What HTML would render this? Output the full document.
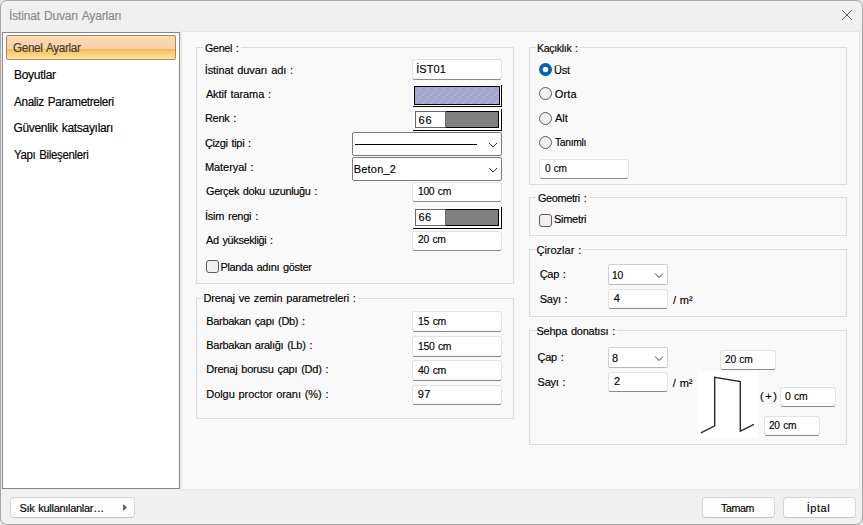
<!DOCTYPE html>
<html><head><meta charset="utf-8"><style>
html,body{margin:0;padding:0;width:863px;height:525px;overflow:hidden;background:#e4e4e4}
.a{position:absolute}
.win{position:absolute;left:0;top:0;width:863px;height:525px;background:#f0f0f0;border:1px solid #a6a6a6;border-radius:7px;box-sizing:border-box}
.grp{position:absolute;border:1px solid #dcdcdc;box-sizing:border-box}
.tb{position:absolute;background:#fff;border:1px solid #e2e2e2;border-bottom:1px solid #8a8a8a;border-radius:3px;box-sizing:border-box}
.cb{position:absolute;background:#fff;border:1px solid #7a7a7a;border-radius:2px;box-sizing:border-box}
.cb2{border-color:#d0d0d0;border-bottom-color:#b8b8b8}
.t{position:absolute;white-space:nowrap;font-family:'Liberation Sans',sans-serif;line-height:40px;-webkit-text-stroke:0.15px currentColor}
</style></head><body>
<div class="win"></div>
<div class="a" style="left:2px;top:32px;width:178px;height:457px;background:#fff;border:1px solid #828790;box-sizing:border-box"></div>
<div class="a" style="left:6px;top:35px;width:170px;height:25px;border:1px solid #a9895c;border-radius:2px;box-sizing:border-box;background:linear-gradient(#fcdcb8 0%,#fbd1a2 55%,#f7b85c 57%,#f8c469 66%,#fbd888 86%,#fde596 100%)"></div>
<div class="a" style="left:181px;top:31px;width:679px;height:459px;background:#f9f9f9;border:1px solid #e6e6e6;box-sizing:border-box"></div>
<div class="grp" style="left:196px;top:47px;width:318px;height:237px"></div>
<div class="grp" style="left:196px;top:298px;width:318px;height:121px"></div>
<div class="grp" style="left:529px;top:47px;width:318px;height:138px"></div>
<div class="grp" style="left:529px;top:197px;width:318px;height:39px"></div>
<div class="grp" style="left:529px;top:249px;width:318px;height:68px"></div>
<div class="grp" style="left:529px;top:330px;width:318px;height:115px"></div>
<div class="a" style="left:203px;top:46px;width:38px;height:3px;background:#f9f9f9"></div>
<div class="a" style="left:203px;top:297px;width:155px;height:3px;background:#f9f9f9"></div>
<div class="a" style="left:536px;top:46px;width:44px;height:3px;background:#f9f9f9"></div>
<div class="a" style="left:536px;top:196px;width:54px;height:3px;background:#f9f9f9"></div>
<div class="a" style="left:536px;top:248px;width:47px;height:3px;background:#f9f9f9"></div>
<div class="a" style="left:536px;top:329px;width:81px;height:3px;background:#f9f9f9"></div>
<div class="tb" style="left:412px;top:59px;width:90px;height:21px"></div>
<div class="tb" style="left:412px;top:182px;width:90px;height:20px"></div>
<div class="tb" style="left:412px;top:231px;width:90px;height:20px"></div>
<div class="tb" style="left:412px;top:311px;width:90px;height:21px"></div>
<div class="tb" style="left:412px;top:336px;width:90px;height:21px"></div>
<div class="tb" style="left:412px;top:360px;width:90px;height:21px"></div>
<div class="tb" style="left:412px;top:385px;width:90px;height:20px"></div>
<div class="tb" style="left:539px;top:159px;width:90px;height:20px"></div>
<div class="tb" style="left:608px;top:289px;width:60px;height:20px"></div>
<div class="tb" style="left:608px;top:372px;width:60px;height:20px"></div>
<div class="tb" style="left:720px;top:350px;width:56px;height:20px"></div>
<div class="tb" style="left:780px;top:387px;width:56px;height:20px"></div>
<div class="tb" style="left:764px;top:416px;width:56px;height:20px"></div>
<div class="cb" style="left:352px;top:132px;width:150px;height:24px"><svg width="150" height="24" style="position:absolute;left:-1px;top:-1px"><path d="M137.0 11.0 L141.0 15.0 L145.0 11.0" fill="none" stroke="#333" stroke-width="1"/></svg></div>
<div class="cb" style="left:352px;top:157px;width:150px;height:24px"><svg width="150" height="24" style="position:absolute;left:-1px;top:-1px"><path d="M137.0 11.0 L141.0 15.0 L145.0 11.0" fill="none" stroke="#333" stroke-width="1"/></svg></div>
<div class="cb cb2" style="left:608px;top:264px;width:60px;height:21px"><svg width="60" height="21" style="position:absolute;left:-1px;top:-1px"><path d="M47.0 9.5 L51.0 13.5 L55.0 9.5" fill="none" stroke="#333" stroke-width="1"/></svg></div>
<div class="cb cb2" style="left:608px;top:347px;width:60px;height:21px"><svg width="60" height="21" style="position:absolute;left:-1px;top:-1px"><path d="M47.0 9.5 L51.0 13.5 L55.0 9.5" fill="none" stroke="#333" stroke-width="1"/></svg></div>
<div class="a" style="left:355px;top:144px;width:122px;height:1px;background:#000"></div>
<div class="a" style="left:413px;top:85px;width:89px;height:22px;background:#fff;border-right:1px solid #000;border-bottom:1px solid #000;box-sizing:border-box"></div>
<div class="a" style="left:414px;top:86px;width:86px;height:19px;border:1px solid #000;box-sizing:border-box;background:#a4a4d4"></div>
<svg class="a" style="left:415px;top:87px" width="84" height="17"><defs><pattern id="hp" patternUnits="userSpaceOnUse" width="8" height="8"><rect x="1" y="6" width="1" height="1" fill="#c4c4b4"/><rect x="3" y="4" width="1" height="1" fill="#c4c4b4"/><rect x="5" y="2" width="1" height="1" fill="#c4c4b4"/><rect x="7" y="0" width="1" height="1" fill="#c4c4b4"/><rect x="0" y="7" width="1" height="1" fill="#b8b8c0"/><rect x="2" y="5" width="1" height="1" fill="#b8b8c0"/><rect x="4" y="3" width="1" height="1" fill="#b8b8c0"/><rect x="6" y="1" width="1" height="1" fill="#b8b8c0"/><rect x="3" y="1" width="1" height="1" fill="#bcbcb8"/><rect x="6" y="5" width="1" height="1" fill="#bcbcb8"/></pattern></defs><rect width="84" height="17" fill="url(#hp)"/></svg>
<div class="a" style="left:413px;top:109px;width:89px;height:22px;background:#fff;border-right:1px solid #000;border-bottom:1px solid #000;box-sizing:border-box"></div>
<div class="a" style="left:415px;top:111px;width:31px;height:17px;border:1px solid #666;box-sizing:border-box;background:#fff"></div>
<div class="a" style="left:446px;top:111px;width:53px;height:17px;border:1px solid #000;border-left:0;box-sizing:border-box;background:#808080"></div>
<div class="a" style="left:413px;top:207px;width:89px;height:22px;background:#fff;border-right:1px solid #000;border-bottom:1px solid #000;box-sizing:border-box"></div>
<div class="a" style="left:415px;top:209px;width:31px;height:17px;border:1px solid #666;box-sizing:border-box;background:#fff"></div>
<div class="a" style="left:446px;top:209px;width:53px;height:17px;border:1px solid #000;border-left:0;box-sizing:border-box;background:#808080"></div>
<div class="a" style="left:206px;top:260px;width:13px;height:13px;border:1px solid #5c5c5c;border-radius:3px;box-sizing:border-box;background:#f0f0f0"></div>
<div class="a" style="left:539px;top:214px;width:13px;height:13px;border:1px solid #5c5c5c;border-radius:3px;box-sizing:border-box;background:#f0f0f0"></div>
<svg class="a" style="left:538px;top:62.0px" width="15" height="15"><circle cx="7.5" cy="7.5" r="6.5" fill="#005fb8"/><circle cx="7.5" cy="7.5" r="2.8" fill="#fff"/></svg>
<svg class="a" style="left:538px;top:86.0px" width="15" height="15"><circle cx="7.5" cy="7.5" r="6" fill="#f0f0f0" stroke="#5c5c5c" stroke-width="1"/></svg>
<svg class="a" style="left:538px;top:110.5px" width="15" height="15"><circle cx="7.5" cy="7.5" r="6" fill="#f0f0f0" stroke="#5c5c5c" stroke-width="1"/></svg>
<svg class="a" style="left:538px;top:134.8px" width="15" height="15"><circle cx="7.5" cy="7.5" r="6" fill="#f0f0f0" stroke="#5c5c5c" stroke-width="1"/></svg>
<div class="a" style="left:698px;top:371px;width:60px;height:67px;background:#fff"></div>
<svg class="a" style="left:0;top:0" width="863" height="525"><polyline points="700.9,432.8 714.7,425.9 714.7,377.3 740.3,381.5 740.3,431.1 753.9,424.4" fill="none" stroke="#2a2a2a" stroke-width="1.4"/></svg>
<div class="a" style="left:10px;top:497px;width:125px;height:21px;background:#fdfdfd;border:1px solid #d5d5d5;border-bottom-color:#c4c4c4;border-radius:4px;box-sizing:border-box"></div>
<div class="a" style="left:702px;top:497px;width:73px;height:21px;background:#fdfdfd;border:1px solid #d5d5d5;border-bottom-color:#c4c4c4;border-radius:4px;box-sizing:border-box"></div>
<div class="a" style="left:783px;top:497px;width:73px;height:21px;background:#fdfdfd;border:1px solid #d5d5d5;border-bottom-color:#c4c4c4;border-radius:4px;box-sizing:border-box"></div>
<svg class="a" style="left:0;top:0" width="863" height="525"><path d="M123 504 L127 507.5 L123 511 Z" fill="#606060"/></svg>
<svg class="a" style="left:0;top:0" width="863" height="525"><path d="M842 10 L852 20 M852 10 L842 20" stroke="#5c5c5c" stroke-width="1"/></svg>
<div class="t" style="left:9.00px;top:-4px;font-size:12px;color:#8a8a8a;letter-spacing:-0.170px;word-spacing:0.970px">İstinat Duvarı Ayarları</div>
<div class="t" style="left:13.42px;top:28px;font-size:12px;color:#3c3c3c;letter-spacing:-0.350px;word-spacing:1.150px;transform:scaleX(0.9761);transform-origin:0 0">Genel Ayarlar</div>
<div class="t" style="left:14.00px;top:55px;font-size:12px;color:#000;letter-spacing:-0.286px">Boyutlar</div>
<div class="t" style="left:14.40px;top:82px;font-size:12px;color:#000;letter-spacing:-0.350px;word-spacing:1.150px;transform:scaleX(0.9756);transform-origin:0 0">Analiz Parametreleri</div>
<div class="t" style="left:13.40px;top:108px;font-size:12px;color:#000;letter-spacing:-0.306px;word-spacing:1.106px">Güvenlik katsayıları</div>
<div class="t" style="left:14.40px;top:135px;font-size:12px;color:#000;letter-spacing:-0.350px;word-spacing:1.150px;transform:scaleX(0.9538);transform-origin:0 0">Yapı Bileşenleri</div>
<div class="t" style="left:204.70px;top:28px;font-size:11px;color:#000;letter-spacing:-0.350px;word-spacing:1.150px;transform:scaleX(0.9780);transform-origin:0 0">Genel :</div>
<div class="t" style="left:204.70px;top:50px;font-size:11px;color:#000;letter-spacing:-0.088px;word-spacing:0.888px">İstinat duvarı adı :</div>
<div class="t" style="left:205.90px;top:74px;font-size:11px;color:#000;letter-spacing:-0.109px;word-spacing:0.909px">Aktif tarama :</div>
<div class="t" style="left:204.90px;top:98px;font-size:11px;color:#000;letter-spacing:-0.275px;word-spacing:1.075px">Renk :</div>
<div class="t" style="left:204.90px;top:123px;font-size:11px;color:#000;letter-spacing:-0.333px;word-spacing:1.133px">Çizgi tipi :</div>
<div class="t" style="left:204.90px;top:147px;font-size:11px;color:#000;letter-spacing:-0.038px;word-spacing:0.838px">Materyal :</div>
<div class="t" style="left:205.90px;top:171px;font-size:11px;color:#000;letter-spacing:-0.350px;word-spacing:1.150px;transform:scaleX(0.9902);transform-origin:0 0">Gerçek doku uzunluğu :</div>
<div class="t" style="left:204.90px;top:196px;font-size:11px;color:#000;letter-spacing:-0.233px;word-spacing:1.033px">İsim rengi :</div>
<div class="t" style="left:205.90px;top:220px;font-size:11px;color:#000;letter-spacing:-0.350px;word-spacing:1.150px;transform:scaleX(0.9911);transform-origin:0 0">Ad yüksekliği :</div>
<div class="t" style="left:220.50px;top:247px;font-size:11px;color:#000;letter-spacing:-0.350px;word-spacing:1.150px">Planda adını göster</div>
<div class="t" style="left:416.20px;top:49px;font-size:11px;color:#000;letter-spacing:0.100px">İST01</div>
<div class="t" style="left:418.40px;top:100px;font-size:11px;color:#000;letter-spacing:1.000px">66</div>
<div class="t" style="left:353.80px;top:149px;font-size:11px;color:#000;letter-spacing:0.183px">Beton_2</div>
<div class="t" style="left:417.96px;top:171px;font-size:11px;color:#000;letter-spacing:-0.350px;word-spacing:1.150px;transform:scaleX(0.9360);transform-origin:0 0">100 cm</div>
<div class="t" style="left:418.40px;top:197px;font-size:11px;color:#000;letter-spacing:0.500px">66</div>
<div class="t" style="left:418.20px;top:219px;font-size:11px;color:#000;letter-spacing:-0.350px;word-spacing:1.150px;transform:scaleX(0.9357);transform-origin:0 0">20 cm</div>
<div class="t" style="left:203.40px;top:278px;font-size:11px;color:#000;letter-spacing:-0.162px;word-spacing:0.962px">Drenaj ve zemin parametreleri :</div>
<div class="t" style="left:206.30px;top:301px;font-size:11px;color:#000;letter-spacing:-0.319px;word-spacing:1.119px">Barbakan çapı (Db) :</div>
<div class="t" style="left:206.30px;top:325px;font-size:11px;color:#000;letter-spacing:-0.300px;word-spacing:1.100px">Barbakan aralığı (Lb) :</div>
<div class="t" style="left:206.30px;top:349px;font-size:11px;color:#000;letter-spacing:-0.220px;word-spacing:1.020px">Drenaj borusu çapı (Dd) :</div>
<div class="t" style="left:206.30px;top:374px;font-size:11px;color:#000;letter-spacing:-0.070px;word-spacing:0.870px">Dolgu proctor oranı (%) :</div>
<div class="t" style="left:417.65px;top:301px;font-size:11px;color:#000;letter-spacing:-0.350px;word-spacing:1.150px;transform:scaleX(0.9550);transform-origin:0 0">15 cm</div>
<div class="t" style="left:417.66px;top:326px;font-size:11px;color:#000;letter-spacing:-0.350px;word-spacing:1.150px;transform:scaleX(0.9448);transform-origin:0 0">150 cm</div>
<div class="t" style="left:417.70px;top:350px;font-size:11px;color:#000;letter-spacing:-0.350px;word-spacing:1.150px;transform:scaleX(0.9530);transform-origin:0 0">40 cm</div>
<div class="t" style="left:417.70px;top:374px;font-size:11px;color:#000;letter-spacing:0.500px">97</div>
<div class="t" style="left:536.54px;top:28px;font-size:11px;color:#000;letter-spacing:-0.350px;word-spacing:1.150px;transform:scaleX(0.9634);transform-origin:0 0">Kaçıklık :</div>
<div class="t" style="left:554.00px;top:50px;font-size:11px;color:#000;letter-spacing:-0.200px">Üst</div>
<div class="t" style="left:554.70px;top:74px;font-size:11px;color:#000;letter-spacing:0.167px">Orta</div>
<div class="t" style="left:555.00px;top:98px;font-size:11px;color:#000">Alt</div>
<div class="t" style="left:555.20px;top:122px;font-size:11px;color:#000;letter-spacing:-0.350px;transform:scaleX(0.9392);transform-origin:0 0">Tanımlı</div>
<div class="t" style="left:544.60px;top:148px;font-size:11px;color:#000;letter-spacing:-0.350px;word-spacing:1.150px;transform:scaleX(0.9221);transform-origin:0 0">0 cm</div>
<div class="t" style="left:537.90px;top:178px;font-size:11px;color:#000;letter-spacing:-0.350px;word-spacing:1.150px;transform:scaleX(0.9878);transform-origin:0 0">Geometri :</div>
<div class="t" style="left:554.00px;top:199px;font-size:11px;color:#000;letter-spacing:-0.283px">Simetri</div>
<div class="t" style="left:536.50px;top:230px;font-size:11px;color:#000;letter-spacing:-0.012px;word-spacing:0.812px">Çirozlar :</div>
<div class="t" style="left:539.70px;top:254px;font-size:11px;color:#000;letter-spacing:-0.300px;word-spacing:1.100px">Çap :</div>
<div class="t" style="left:612.06px;top:255px;font-size:11px;color:#000;letter-spacing:-0.350px;transform:scaleX(0.9390);transform-origin:0 0">10</div>
<div class="t" style="left:539.70px;top:279px;font-size:11px;color:#000;letter-spacing:-0.250px;word-spacing:1.050px">Sayı :</div>
<div class="t" style="left:613.80px;top:278px;font-size:11px;color:#000">4</div>
<div class="t" style="left:673.00px;top:280px;font-size:11px;color:#000;letter-spacing:-0.050px;word-spacing:0.850px">/ m²</div>
<div class="t" style="left:536.40px;top:311px;font-size:11px;color:#000;letter-spacing:-0.223px;word-spacing:1.023px">Sehpa donatısı :</div>
<div class="t" style="left:537.60px;top:337px;font-size:11px;color:#000;letter-spacing:-0.300px;word-spacing:1.100px">Çap :</div>
<div class="t" style="left:612.00px;top:338px;font-size:11px;color:#000">8</div>
<div class="t" style="left:537.60px;top:362px;font-size:11px;color:#000;letter-spacing:-0.250px;word-spacing:1.050px">Sayı :</div>
<div class="t" style="left:613.90px;top:361px;font-size:11px;color:#000">2</div>
<div class="t" style="left:672.80px;top:363px;font-size:11px;color:#000;letter-spacing:-0.050px;word-spacing:0.850px">/ m²</div>
<div class="t" style="left:725.30px;top:339px;font-size:11px;color:#000;letter-spacing:-0.350px;word-spacing:1.150px;transform:scaleX(0.9322);transform-origin:0 0">20 cm</div>
<div class="t" style="left:760.10px;top:376px;font-size:11px;color:#000;letter-spacing:1.500px">(+)</div>
<div class="t" style="left:784.60px;top:376px;font-size:11px;color:#000;letter-spacing:-0.350px;word-spacing:1.150px;transform:scaleX(0.9437);transform-origin:0 0">0 cm</div>
<div class="t" style="left:769.30px;top:405px;font-size:11px;color:#000;letter-spacing:-0.350px;word-spacing:1.150px;transform:scaleX(0.9252);transform-origin:0 0">20 cm</div>
<div class="t" style="left:19.50px;top:488px;font-size:11px;color:#000;letter-spacing:-0.300px;word-spacing:1.100px">Sık kullanılanlar…</div>
<div class="t" style="left:720.60px;top:488px;font-size:11px;color:#000;letter-spacing:-0.350px;transform:scaleX(0.9653);transform-origin:0 0">Tamam</div>
<div class="t" style="left:806.70px;top:488px;font-size:11px;color:#000;letter-spacing:0.550px">İptal</div>
</body></html>
